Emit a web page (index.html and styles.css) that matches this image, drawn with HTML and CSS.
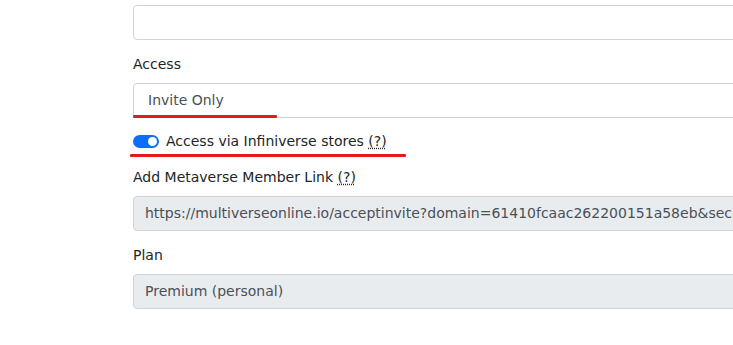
FILE: index.html
```html
<!DOCTYPE html>
<html>
<head>
<meta charset="utf-8">
<link rel="stylesheet" href="styles.css">
</head>
<body>
<div class="form">
  <div class="control first"></div>

  <div class="group">
    <label class="label">Access</label>
    <div class="select-wrap">
      <div class="control select">Invite Only</div>
      <div class="mark mark-select"></div>
    </div>
  </div>

  <div class="switch-row">
    <span class="switch"><span class="knob"></span></span>
    <span class="switch-text">Access via Infiniverse stores <abbr class="hint">(?)</abbr></span>
    <div class="mark mark-switch"></div>
  </div>

  <div class="group tight">
    <label class="label">Add Metaverse Member Link <abbr class="hint">(?)</abbr></label>
    <div class="control readonly">https://multiverseonline.io/acceptinvite?domain=61410fcaac262200151a58eb&amp;secret=8f2a1c</div>
  </div>

  <div class="group">
    <label class="label">Plan</label>
    <div class="control readonly">Premium (personal)</div>
  </div>
</div>
</body>
</html>
```

FILE: styles.css
```css
html, body {
  margin: 0;
  padding: 0;
  background: #fff;
  overflow: hidden;
}
body {
  font-family: "DejaVu Sans", sans-serif;
  font-size: 14px;
  color: #212529;
}
.form {
  padding-left: 133px;
  padding-top: 5px;
  width: 700px;
}
.control {
  box-sizing: border-box;
  height: 35px;
  border: 1px solid #ced4da;
  border-radius: 4px;
  background: #fff;
  color: #495057;
  line-height: 33px;
  padding: 0 11px;
  white-space: nowrap;
  overflow: hidden;
}
.control.select {
  padding-left: 14px;
}
.control.readonly {
  background: #e9ecef;
}
.group {
  margin-top: 13px;
}
.group.tight {
  margin-top: 14px;
}
.label {
  display: block;
  line-height: 22px;
  margin-bottom: 8px;
}
.select-wrap {
  position: relative;
}
.mark {
  position: absolute;
  height: 3px;
  background: #e41b1b;
  border-radius: 1px;
}
.mark-select {
  left: 0;
  top: 32px;
  width: 144px;
}
.switch-row {
  position: relative;
  margin-top: 12px;
  height: 22px;
  display: flex;
  align-items: center;
  gap: 7px;
}
.switch {
  box-sizing: border-box;
  width: 26px;
  height: 13px;
  border-radius: 7px;
  background: #0d6efd;
  display: flex;
  justify-content: flex-end;
  align-items: center;
  padding-right: 2px;
}
.knob {
  width: 9px;
  height: 9px;
  border-radius: 50%;
  background: #fff;
}
.mark-switch {
  left: -3px;
  top: 24px;
  width: 276px;
}
.hint {
  text-decoration: underline dotted;
  text-underline-offset: 2px;
  cursor: help;
}
```
